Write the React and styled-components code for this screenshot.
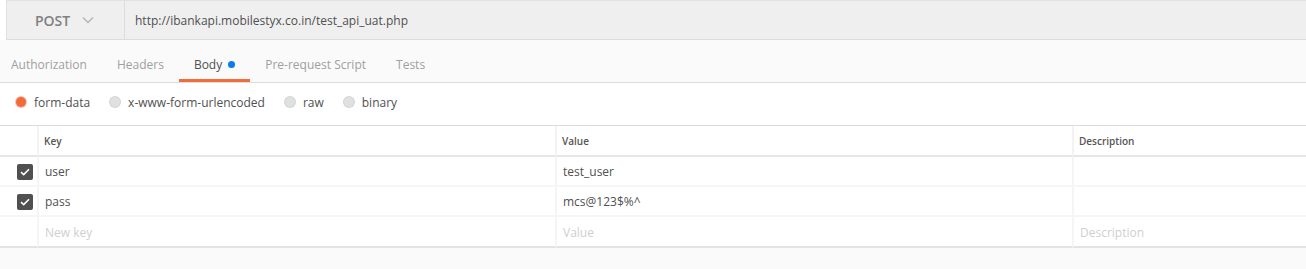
import React from 'react';
import styled, { createGlobalStyle } from 'styled-components';

const GlobalStyle = createGlobalStyle`
    body {
        margin: 0;
        background: #ffffff;
        font-family: "Open Sans", "Liberation Sans", sans-serif;
        color: #505050;
    }
`;

const Page = styled.div`
    width: 1306px;
    height: 269px;
    overflow: hidden;
    background: #ffffff;
`;

const RequestBar = styled.div`
    display: flex;
    align-items: stretch;
    height: 40px;
    margin-left: 6px;
    background: #efefef;
    border-top: 1px solid #e2e2e2;
    border-bottom: 1px solid #dcdcdc;
    border-left: 1px solid #e2e2e2;
    box-sizing: border-box;
`;

const MethodSelect = styled.div`
    width: 115px;
    display: flex;
    align-items: center;
    justify-content: center;
    gap: 12px;
    border-right: 1px solid #dcdcdc;
    font-size: 14px;
    font-weight: 600;
    color: #808080;
    padding-right: 2px;
`;

const UrlText = styled.div`
    display: flex;
    align-items: center;
    padding-left: 10px;
    font-size: 12px;
    color: #505050;
`;

const TabBar = styled.div`
    display: flex;
    align-items: stretch;
    height: 43px;
    background: #fafafa;
    border-bottom: 1px solid #dcdcdc;
    box-sizing: border-box;
`;

const Tab = styled.div`
    display: flex;
    align-items: center;
    gap: 6px;
    padding: 10px 15px 0 ${p => p.$first ? 11 : 15}px;
    font-size: 12px;
    color: ${p => p.$active ? '#505050' : '#a0a0a0'};
    border-bottom: 3px solid ${p => p.$active ? '#f26b3a' : 'transparent'};
`;

const Dot = styled.span`
    width: 7px;
    height: 7px;
    border-radius: 50%;
    background: #097bed;
`;

const ModeRow = styled.div`
    display: flex;
    align-items: center;
    height: 43px;
    padding: 0 0 3px 16px;
    gap: 20px;
    border-bottom: 1px solid #dcdcdc;
    box-sizing: border-box;
`;

const ModeOption = styled.label`
    display: flex;
    align-items: center;
    gap: 8px;
    font-size: 12px;
    color: #505050;
`;

const Radio = styled.span`
    width: 10px;
    height: 10px;
    border-radius: 50%;
    background: ${p => p.$checked ? '#f26b3a' : '#e0e0e0'};
    box-shadow: 0 0 0 1px ${p => p.$checked ? '#f7c1ad' : '#d6d6d6'};
    margin-top: -2px;
`;

const Table = styled.div`
    display: grid;
    grid-template-columns: 37px 518px 517px 1fr;
`;

const HeadCell = styled.div`
    height: 31px;
    display: flex;
    align-items: center;
    padding-left: 5px;
    padding-top: 1px;
    font-size: 10px;
    font-weight: 600;
    color: #555555;
    border-bottom: 2px solid #e6e6e6;
    border-left: ${p => p.$first ? 'none' : '2px solid #f3f3f3'};
    box-sizing: border-box;
`;

const Cell = styled.div`
    height: ${p => p.$last ? 31 : 30}px;
    display: flex;
    align-items: center;
    justify-content: ${p => p.$check ? 'flex-end' : 'flex-start'};
    padding-left: ${p => p.$check ? 0 : 6}px;
    padding-right: ${p => p.$check ? 4 : 0}px;
    padding-top: 1px;
    font-size: 12px;
    color: ${p => p.$placeholder ? '#cfcfcf' : '#505050'};
    border-bottom: ${p => p.$last ? '2px solid #e3e3e3' : '2px solid #f6f6f6'};
    border-left: ${p => p.$check ? 'none' : '2px solid #f5f5f5'};
    box-sizing: border-box;
`;

const Checkbox = styled.span`
    width: 16px;
    height: 16px;
    border-radius: 2px;
    background: #505050;
    display: flex;
    align-items: center;
    justify-content: center;
`;

const Footer = styled.div`
    height: 22px;
    background: #fafafa;
`;

const rows = [
    { key: 'user', value: 'test_user' },
    { key: 'pass', value: 'mcs@123$%^' },
];

function Check() {
    return (
        <Checkbox>
            <svg width="10" height="8" viewBox="0 0 10 8">
                <path d="M1 4.2 L3.7 6.6 L9 1.2" stroke="#fff" strokeWidth="1.6" fill="none" />
            </svg>
        </Checkbox>
    );
}

function App() {
    return (
        <Page>
            <GlobalStyle />
            <RequestBar>
                <MethodSelect>
                    POST
                    <svg width="12" height="8" viewBox="0 0 12 8">
                        <path d="M1 1.5 L6 6.5 L11 1.5" stroke="#b5b5b5" strokeWidth="1.3" fill="none" />
                    </svg>
                </MethodSelect>
                <UrlText>http://ibankapi.mobilestyx.co.in/test_api_uat.php</UrlText>
            </RequestBar>

            <TabBar>
                <Tab $first>Authorization</Tab>
                <Tab>Headers</Tab>
                <Tab $active>Body <Dot /></Tab>
                <Tab>Pre-request Script</Tab>
                <Tab>Tests</Tab>
            </TabBar>

            <ModeRow>
                <ModeOption><Radio $checked />form-data</ModeOption>
                <ModeOption><Radio />x-www-form-urlencoded</ModeOption>
                <ModeOption><Radio />raw</ModeOption>
                <ModeOption><Radio />binary</ModeOption>
            </ModeRow>

            <Table>
                <HeadCell $first />
                <HeadCell>Key</HeadCell>
                <HeadCell>Value</HeadCell>
                <HeadCell>Description</HeadCell>

                {rows.map(row => (
                    <React.Fragment key={row.key}>
                        <Cell $check><Check /></Cell>
                        <Cell>{row.key}</Cell>
                        <Cell>{row.value}</Cell>
                        <Cell />
                    </React.Fragment>
                ))}

                <Cell $check $last />
                <Cell $last $placeholder>New key</Cell>
                <Cell $last $placeholder>Value</Cell>
                <Cell $last $placeholder>Description</Cell>
            </Table>

            <Footer />
        </Page>
    );
}

export default App;
